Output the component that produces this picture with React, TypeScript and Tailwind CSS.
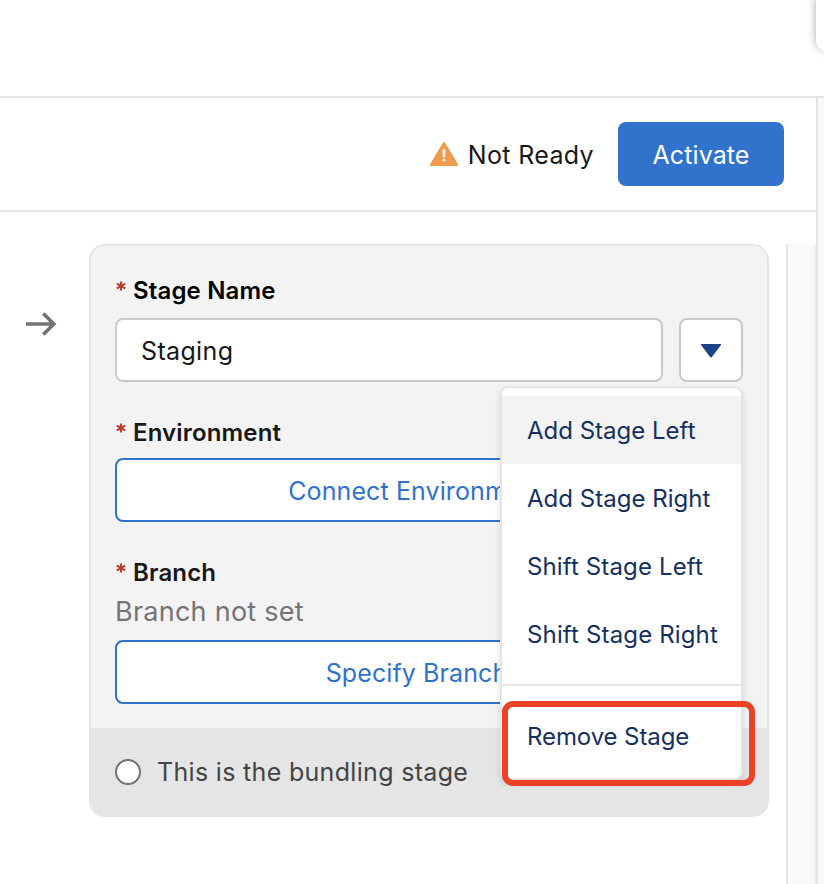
import React from "react";

const menuItems = [
  { label: "Add Stage Left", tone: "bg-[#f3f3f3] tracking-[0px]" },
  { label: "Add Stage Right", tone: "tracking-[0.03px]" },
  { label: "Shift Stage Left", tone: "tracking-[0.13px]" },
  { label: "Shift Stage Right", tone: "tracking-[0.15px]" },
];

function FieldLabel({ children, className = "" }: { children: React.ReactNode; className?: string }) {
  return (
    <div className={`flex h-8 items-center text-[24px] font-semibold leading-8 tracking-[0.15px] ${className}`}>
      <svg width="10" height="10" viewBox="0 0 10 10" className="mb-[9px] ml-[1px] mr-[7px] shrink-0" stroke="#b83f36" strokeWidth="2.2">
        <path d="M5 .4v9.2M.8 2.6l8.4 4.8M9.2 2.6L.8 7.4" />
      </svg>
      <span className="pt-0.5">{children}</span>
    </div>
  );
}

function OutlineButton({ children }: { children: React.ReactNode }) {
  return (
    <button className="flex h-16 w-full items-center justify-center rounded-lg border-2 border-[#2f72cc] bg-white pr-[25px] pt-1 text-[25px] tracking-[0.1px] text-[#2f72cc]">
      {children}
    </button>
  );
}

function StageMenu() {
  return (
    <div className="absolute right-0 top-[68px] z-10 w-[243px] rounded-lg border-2 border-[#e5e5e5] bg-white py-2 text-[24px] text-[#15305f] shadow-[0_4px_6px_rgba(0,0,0,0.12)]">
      {menuItems.map((item) => (
        <div key={item.label} className={`flex h-[68px] items-center whitespace-nowrap pl-[25px] pt-0.5 ${item.tone}`}>
          {item.label}
        </div>
      ))}
      <div className="mb-4 mt-4 h-0.5 bg-[#e5e5e5]" />
      <div className="flex h-[68px] items-center pl-[25px] pt-0.5 tracking-[-0.1px]">Remove Stage</div>
      <div className="absolute -right-[14px] -bottom-[8px] h-[85px] w-[253px] rounded-[11px] border-6 border-[#ec4127]" />
    </div>
  );
}

export default function App() {
  return (
    <div className="flex h-[884px] w-[824px] flex-col overflow-hidden bg-white font-['Inter','Liberation_Sans',sans-serif] text-[#181818]">
      <div className="flex h-[98px] shrink-0 justify-end border-b-2 border-[#e5e5e5]">
        <div className="-mr-3 h-[52px] w-5 rounded-bl-xl bg-white shadow-[0_-2px_8px_rgba(0,0,0,0.36)]" />
      </div>
      <div className="flex min-h-0 flex-1">
        <main className="flex w-[816px] flex-col">
          <header className="flex h-[114px] shrink-0 items-center justify-end border-b-2 border-[#e5e5e5] pr-8">
            <svg width="28" height="24" viewBox="0 0 28 24" className="mb-px mr-2.5">
              <path d="M12.7 1 .3 21.8C-.4 23 .2 24 1.2 24h25.6c1 0 1.6-1 .9-2.2L15.3 1c-.6-1.1-2-1.1-2.6 0Z" fill="#f1994f" />
              <rect x="12.7" y="7" width="2.6" height="8.5" rx="1" fill="#fff" />
              <circle cx="14" cy="18.2" r="1.4" fill="#fff" />
            </svg>
            <span className="mr-6 pt-1 text-[25px] tracking-[0.35px]">Not Ready</span>
            <button className="flex h-16 w-[166px] items-center justify-center rounded-lg bg-[#3173cc] pt-1 text-[25px] tracking-[0.1px] text-white">Activate</button>
          </header>
          <div className="flex min-h-0 flex-1 pt-8">
            <div className="w-[89px] shrink-0 pl-[26px] pt-[68px]">
              <svg width="31" height="24" viewBox="0 0 31 24" fill="none" stroke="#747474" strokeWidth="3.6">
                <path d="M0 12h28M17.3 1.5 27.8 12 17.3 22.5" />
              </svg>
            </div>
            <section className="flex h-[573px] w-[680px] shrink-0 flex-col rounded-2xl border-2 border-[#e5e5e5] bg-[#f3f3f3]">
              <div className="flex h-[482px] flex-col px-6 pt-7">
                <FieldLabel className="text-black">Stage Name</FieldLabel>
                <div className="relative mt-3 flex gap-4">
                  <div className="flex h-16 w-[548px] items-center rounded-lg border-2 border-[#c9c9c9] bg-white pl-6 pt-1 text-[25px] tracking-[0.35px]">Staging</div>
                  <button className="flex h-16 w-16 items-center justify-center rounded-lg border-2 border-[#c9c9c9] bg-white pt-0.5">
                    <svg width="20" height="14" viewBox="0 0 20 14"><path d="M0 0h20v1L10.5 13.5h-1L0 1Z" fill="#1b4487" /></svg>
                  </button>
                  <StageMenu />
                </div>
                <FieldLabel className="mb-2.5 mt-[34px]">Environment</FieldLabel>
                <OutlineButton>Connect Environment</OutlineButton>
                <FieldLabel className="mt-[34px]">Branch</FieldLabel>
                <div className="mb-2 mt-1 flex h-10 items-center text-[27px] tracking-[0.25px] text-[#747474]">Branch not set</div>
                <OutlineButton>Specify Branch</OutlineButton>
              </div>
              <div className="flex flex-1 items-center rounded-b-[14px] bg-[#e5e5e5] px-6 text-[25px] tracking-[0.32px] text-[#444]">
                <span className="mr-4 h-[26px] w-[26px] rounded-full border-2 border-[#747474] bg-white" />
                <span className="pt-0.5">This is the bundling stage</span>
              </div>
            </section>
            <div className="ml-[17px] h-full flex-1 border-x-2 border-l-[#e5e5e5] border-r-[#f0f0f0] bg-[#fafafa]" />
          </div>
        </main>
        <aside className="flex-1 border-l-2 border-[#e5e5e5] bg-[#fafafa]" />
      </div>
    </div>
  );
}
